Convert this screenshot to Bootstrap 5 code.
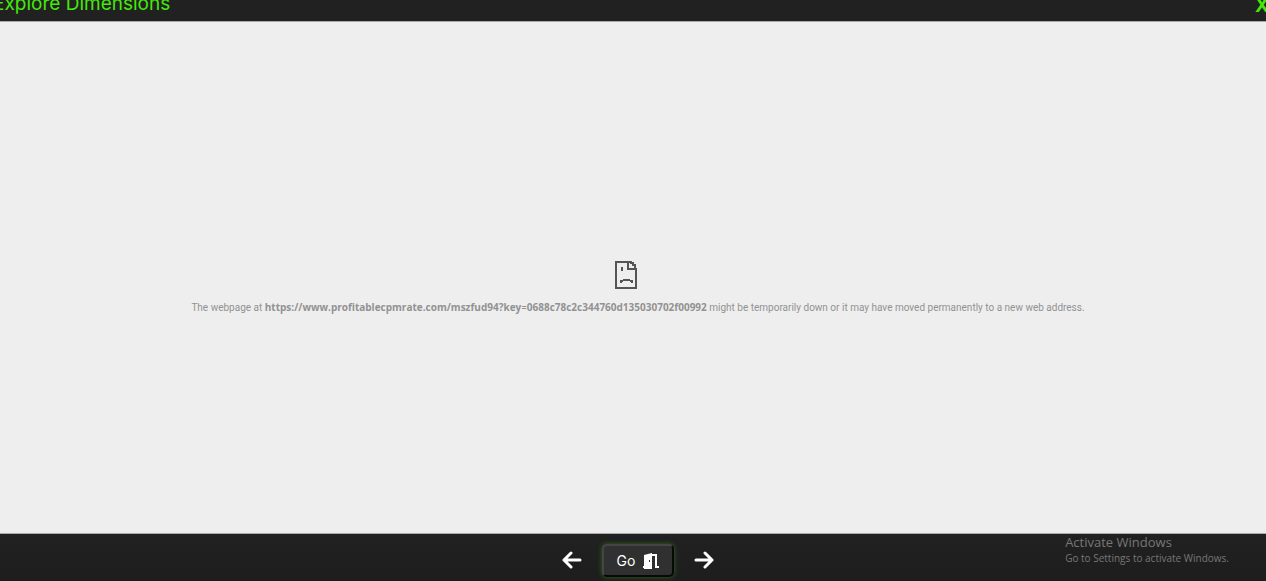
<!DOCTYPE html>
<html lang="en">
<head>
<meta charset="utf-8">
<meta name="viewport" content="width=device-width, initial-scale=1">
<title>Explore Dimensions</title>
<link href="https://cdn.jsdelivr.net/npm/bootstrap@5.3.0/dist/css/bootstrap.min.css" rel="stylesheet">
<style>
body { background: #212121; font-family: "Open Sans", sans-serif; }
.top-bar { height: 21px; background: #212121; }
.top-bar h1, .close-btn { font: 400 19px/20px Inter, sans-serif; color: #44e80a; }
.top-bar h1 { margin: -6px 0 0 -7px; white-space: nowrap; }
.close-btn { font-weight: 700; margin: -4px -3px 0 0; }
.frame-view { background: #eee; border-top: 1px solid #aaa; border-bottom: 1px solid #aaa; color: #929292; padding: 20px 0 0 10px; }
.frame-view p { font: 10px/14px Roboto, sans-serif; }
.frame-view b { font-family: "Open Sans", sans-serif; }
.sad-page { margin: 0 25px 10px 0; }
.bottom-bar { height: 47px; background: linear-gradient(#212121, #1d1d1d); padding: 6px 0 0 10px; }
.arrow-btn { width: 20px; height: 20px; }
.go-btn { width: 72px; height: 33px; color: #fff; font: 400 14px/20px Inter, sans-serif; background: #303030; border: 2px solid; border-color: #454545 #080808 #080808 #454545; border-radius: 5px; box-shadow: 0 0 5px #326719; }
.notice { right: 37px; top: 0; color: #777; }
.notice strong { font-size: 13px; line-height: 17px; font-weight: 400; }
.notice span { font-size: 10px; line-height: 14px; }
</style>
</head>
<body class="vh-100 d-flex flex-column overflow-hidden">
<header class="top-bar d-flex justify-content-between align-items-start overflow-hidden flex-shrink-0">
  <h1>Explore Dimensions</h1>
  <button type="button" class="close-btn border-0 bg-transparent p-0" aria-label="Close">X</button>
</header>
<main class="frame-view flex-grow-1 d-flex flex-column align-items-center justify-content-center">
  <svg class="sad-page" width="24" height="30" viewBox="0 0 24 30" fill="none" stroke="#555" stroke-width="2" aria-hidden="true">
    <path d="M17 2H2v26h20V8M14 2v7h8M17 1v2h2v2h2v3"/>
    <path d="M8 7v4M7 23v-2h2M9 20h7M16 21h2v2"/>
  </svg>
  <p class="mb-0 text-center">The webpage at <b>https://www.profitablecpmrate.com/mszfud94?key</b>=<b>0688c78c2c344760d135030702f00992</b> might be temporarily down or it may have moved permanently to a new web address.</p>
</main>
<footer class="bottom-bar position-relative d-flex align-items-center justify-content-center flex-shrink-0 gap-3">
  <button type="button" class="arrow-btn border-0 bg-transparent p-0 d-flex" aria-label="Back">
    <svg width="20" height="20" viewBox="0 0 20 20" fill="none" stroke="#fff" stroke-width="3" stroke-linecap="round" stroke-linejoin="round"><path d="M9 2L2 9l7 7M2 9h16"/></svg>
  </button>
  <button type="button" class="go-btn p-0 mx-1 d-flex align-items-center justify-content-center gap-2">Go
    <svg width="16" height="16" viewBox="0 0 16 16" aria-hidden="true"><path fill="#fff" fill-rule="evenodd" d="M0 13h1V2l8-2v16H1v-1H0zM6 7v2h1V7z"/><path d="M9 2h4v12h3" fill="none" stroke="#fff" stroke-width="2"/></svg>
  </button>
  <button type="button" class="arrow-btn border-0 bg-transparent p-0 d-flex" aria-label="Forward">
    <svg width="20" height="20" viewBox="0 0 20 20" fill="none" stroke="#fff" stroke-width="3" stroke-linecap="round" stroke-linejoin="round"><path d="M11 2l7 7-7 7M18 9H2"/></svg>
  </button>
  <div class="notice position-absolute d-flex flex-column"><strong>Activate Windows</strong><span>Go to Settings to activate Windows.</span></div>
</footer>
<script src="https://cdn.jsdelivr.net/npm/bootstrap@5.3.0/dist/js/bootstrap.bundle.min.js"></script>
</body>
</html>
